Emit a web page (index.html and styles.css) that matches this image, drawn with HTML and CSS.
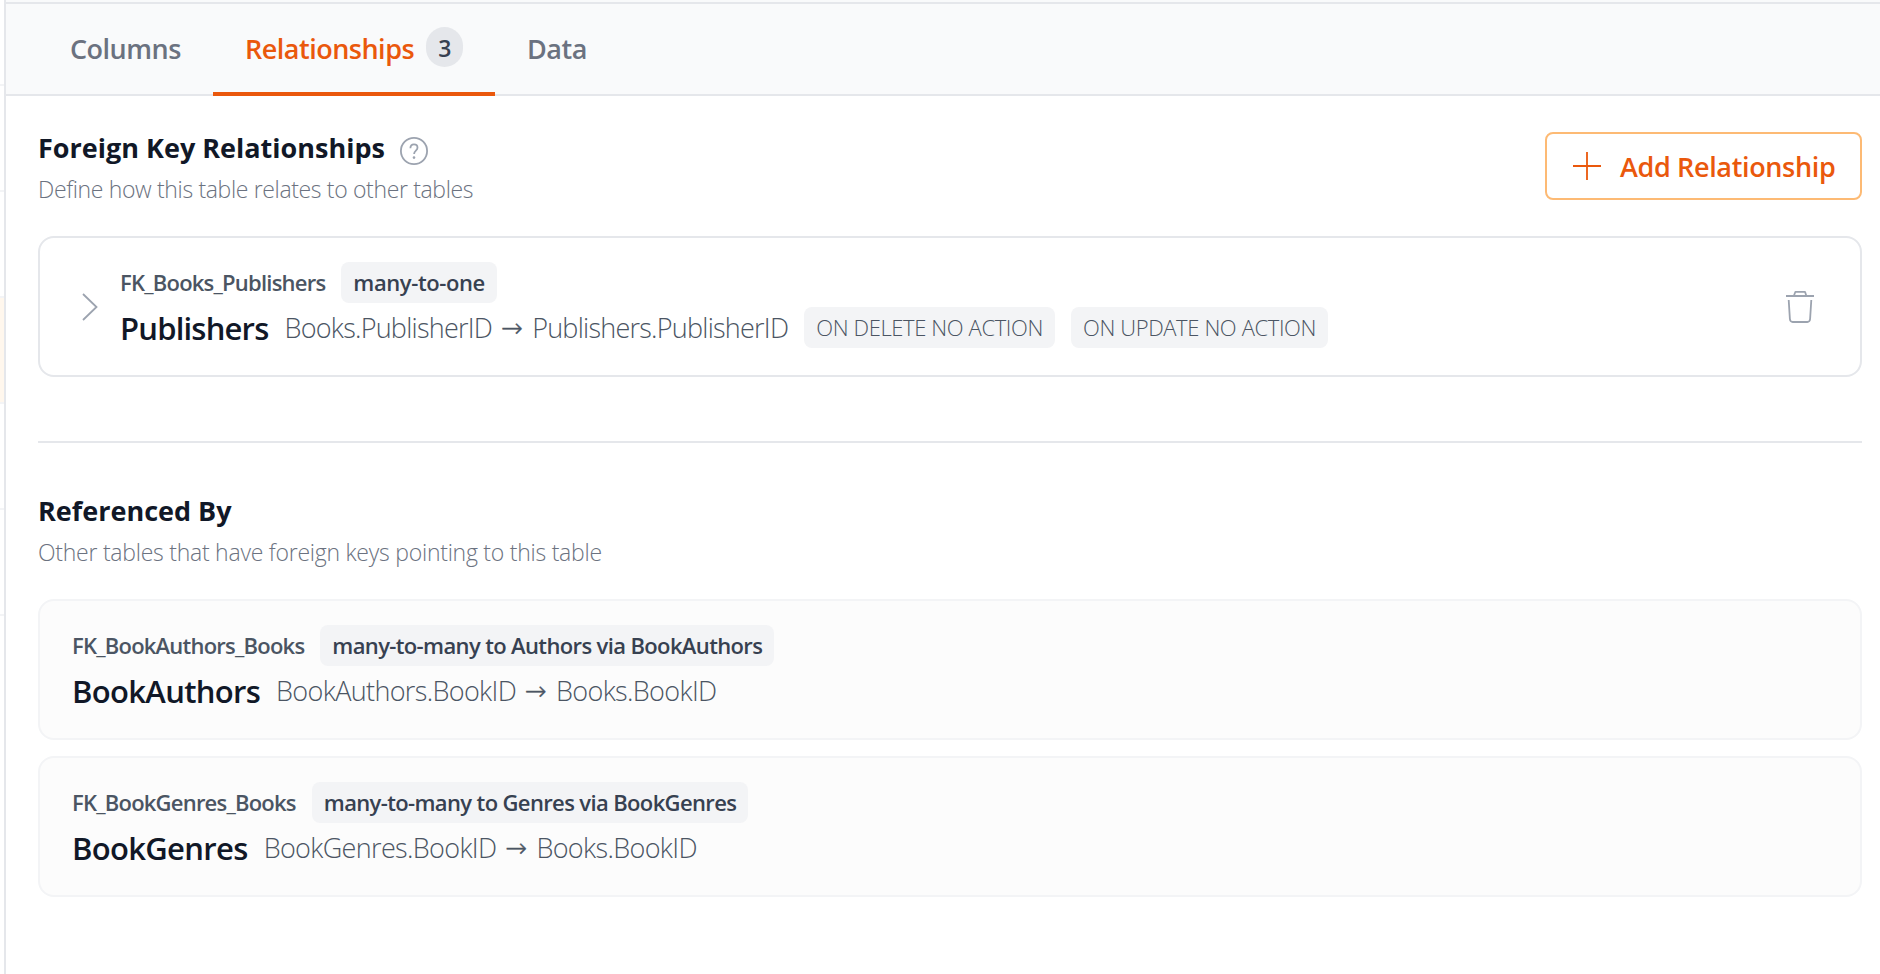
FILE: index.html
```html
<!DOCTYPE html>
<html lang="en">
<head>
  <meta charset="UTF-8" />
  <title>Books - Relationships</title>
  <link rel="stylesheet" href="styles.css">
</head>
<body>

  <div class="layout">
    <aside class="sidebar">
      <div class="sidebar-row first"></div>
      <div class="sidebar-row"></div>
      <div class="sidebar-row"></div>
      <div class="sidebar-row selected"></div>
      <div class="sidebar-row"></div>
      <div class="sidebar-row"></div>
    </aside>

    <main class="panel">
      <nav class="tabs">
        <a class="tab columns">Columns</a>
        <a class="tab active"><span>Relationships</span><span class="count">3</span></a>
        <a class="tab">Data</a>
      </nav>

      <div class="content">
        <section>
          <div class="section-header">
            <div>
              <h3>Foreign Key Relationships
                <svg class="help" viewBox="0 0 28 28" width="28" height="28">
                  <circle cx="14" cy="14" r="13.1" />
                  <path d="M10.4 11.3c0-2.5 1.500-3.900 3.600-3.900s3.500 1.400 3.500 3.300c0 3-3.400 2.800-3.400 6.300" />
                  <circle class="dot" cx="14" cy="20.600" r="1.300" />
                </svg>
              </h3>
              <p class="description">Define how this table relates to other tables</p>
            </div>
            <button class="add-button">
              <svg viewBox="0 0 28 28" width="28" height="28"><path d="M14 0v28M0 14h28" /></svg>
              <span>Add Relationship</span>
            </button>
          </div>

          <div class="card">
            <svg class="chevron" viewBox="0 0 16 28" width="16" height="28"><path d="M1 1l13.500 13L1 27" /></svg>
            <div class="details">
              <div class="row">
                <span class="fk-name">FK_Books_Publishers</span>
                <span class="badge">many-to-one</span>
              </div>
              <div class="row">
                <span class="table-name">Publishers</span>
                <span class="mapping"><span>Books.PublisherID</span><span class="arrow">→</span><span>Publishers.PublisherID</span></span>
                <span class="badge action">ON DELETE NO ACTION</span>
                <span class="badge action">ON UPDATE NO ACTION</span>
              </div>
            </div>
            <svg class="trash" viewBox="0 0 28 32" width="28" height="32">
              <path d="M0 5h28M8 4.500l1.200-3.200q.3-.5 1-.5h8q.7 0 1 .5L20.200 4.500M2.700 9l1.200 19q.3 3 2.800 3h14.600q2.500 0 2.800-3l1.200-19" />
            </svg>
          </div>
        </section>

        <hr>

        <section>
          <h3>Referenced By</h3>
          <p class="description wide">Other tables that have foreign keys pointing to this table</p>

          <div class="card readonly">
            <div class="details">
              <div class="row">
                <span class="fk-name">FK_BookAuthors_Books</span>
                <span class="badge">many-to-many to Authors via BookAuthors</span>
              </div>
              <div class="row">
                <span class="table-name">BookAuthors</span>
                <span class="mapping"><span>BookAuthors.BookID</span><span class="arrow">→</span><span>Books.BookID</span></span>
              </div>
            </div>
          </div>

          <div class="card readonly">
            <div class="details">
              <div class="row">
                <span class="fk-name">FK_BookGenres_Books</span>
                <span class="badge">many-to-many to Genres via BookGenres</span>
              </div>
              <div class="row">
                <span class="table-name">BookGenres</span>
                <span class="mapping"><span>BookGenres.BookID</span><span class="arrow">→</span><span>Books.BookID</span></span>
              </div>
            </div>
          </div>
        </section>
      </div>
    </main>
  </div>

</body>
</html>
```
FILE: styles.css
```css
* {
  box-sizing: border-box;
}
body {
  margin: 0;
  font-family: "Open Sans", "Noto Sans", sans-serif;
  background: #ffffff;
  color: #111827;
}
svg {
  display: block;
  flex: none;
  fill: none;
  stroke: #9ca3af;
  stroke-width: 1.8;
}
h3, p {
  margin: 0;
}
.layout {
  display: flex;
  height: 974px;
  overflow: hidden;
}

/* edge of the table list */
.sidebar {
  width: 4px;
  flex: none;
}
.sidebar-row {
  height: 106px;
  border-bottom: 2px solid #f3f4f6;
}
.sidebar-row.first {
  height: 86px;
}
.sidebar-row.selected {
  background: #fff7ed;
}

.panel {
  flex: 1;
  border-left: 2px solid #e5e7eb;
}
.tabs {
  display: flex;
  height: 94px;
  margin-top: 2px;
  padding-left: 32px;
  background: #f9fafb;
  border-top: 2px solid #e5e7eb;
  border-bottom: 2px solid #e5e7eb;
  box-shadow: 0 -2px 0 #f9fafb;
}
.tab {
  display: flex;
  align-items: center;
  height: 92px;
  padding: 0 32px;
  font-size: 27px;
  font-weight: 550;
  letter-spacing: -0.5px;
  color: #6b7280;
  border-bottom: 4px solid transparent;
}
.tab.columns {
  width: 175px;
}
.tab.active {
  width: 282px;
  justify-content: space-between;
  color: #ea580c;
  border-bottom-color: #ea580c;
}
.count {
  width: 37px;
  height: 40px;
  margin-bottom: 3px;
  border-radius: 20px;
  background: #e5e7eb;
  color: #374151;
  font-size: 23px;
  line-height: 42px;
  text-align: center;
}

.content {
  padding: 36px 18px 0 32px;
}
.section-header {
  display: flex;
  justify-content: space-between;
  height: 104px;
}
h3 {
  display: flex;
  gap: 15px;
  height: 36px;
  font-size: 27px;
  line-height: 32px;
  font-weight: 700;
}
.help {
  margin-top: 5px;
}
.help .dot {
  fill: #9ca3af;
  stroke: none;
}
.description {
  font-size: 23px;
  line-height: 42px;
  font-weight: 300;
  letter-spacing: -0.35px;
  color: #6b7280;
}
.description.wide {
  margin-bottom: 26px;
  letter-spacing: -0.25px;
}
.add-button {
  display: flex;
  align-items: center;
  gap: 19px;
  width: 317px;
  height: 68px;
  padding: 0 26px;
  border: 2px solid #fdba74;
  border-radius: 8px;
  background: #ffffff;
  color: #ea580c;
  font: 550 27px "Open Sans", sans-serif;
  letter-spacing: -0.35px;
  white-space: nowrap;
}
.add-button svg {
  stroke: #ea580c;
}

.card {
  display: flex;
  height: 141px;
  padding: 24px 46px 0 42px;
  border: 2px solid #e5e7eb;
  border-radius: 16px;
}
.chevron {
  margin: 31px 22px 0 0;
}
.trash {
  margin: 29px 0 0 auto;
}
.row {
  display: flex;
  align-items: center;
  gap: 16px;
  height: 41px;
  margin-bottom: 4px;
  white-space: nowrap;
}
.fk-name {
  padding-bottom: 2px;
  font-size: 22px;
  font-weight: 550;
  letter-spacing: -0.78px;
  color: #4b5563;
}
.badge {
  height: 41px;
  padding: 0 12px;
  border-radius: 8px;
  background: #f3f4f6;
  color: #374151;
  font-size: 22px;
  line-height: 40px;
  font-weight: 600;
  letter-spacing: -0.4px;
}
.badge.action {
  color: #4b5563;
  font-weight: 300;
  letter-spacing: -0.38px;
}
.table-name {
  font-size: 31px;
  font-weight: 600;
  letter-spacing: -0.8px;
}
.mapping {
  display: flex;
  align-items: center;
  gap: 9px;
  font-size: 27px;
  font-weight: 300;
  letter-spacing: -0.75px;
  color: #4b5563;
}
.arrow {
  width: 22px;
  font-family: "DejaVu Sans", sans-serif;
  font-size: 26px;
  line-height: 30px;
  -webkit-text-stroke: 0.4px #4b5563;
}
hr {
  height: 2px;
  margin: 64px 0 52px;
  border: 0;
  background: #e5e7eb;
}

.card.readonly {
  margin-bottom: 16px;
  padding-left: 32px;
  background: #fcfcfc;
  border-color: #f3f4f6;
}
.readonly .badge {
  letter-spacing: -0.63px;
}
.readonly .table-name {
  letter-spacing: -0.68px;
}
.readonly .mapping {
  letter-spacing: -0.65px;
}
```
